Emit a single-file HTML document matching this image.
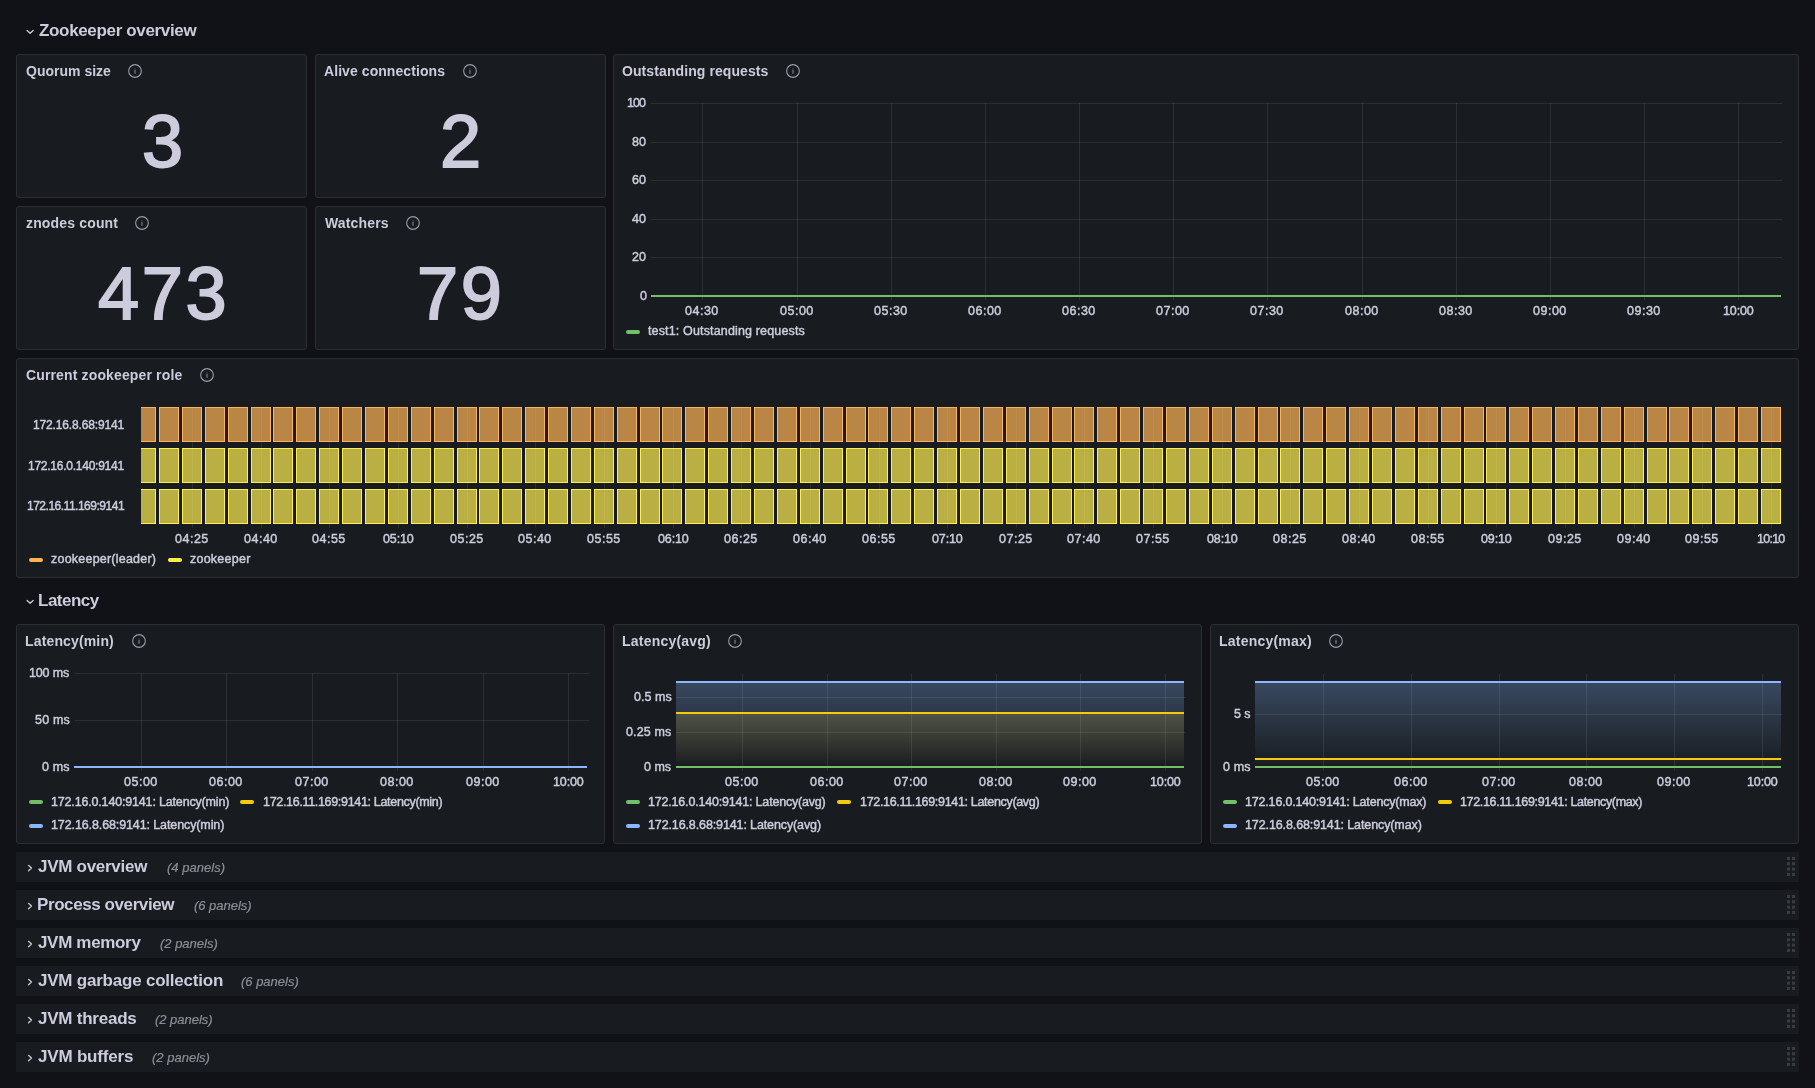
<!DOCTYPE html><html><head><meta charset="utf-8"><style>
html,body{margin:0;padding:0;background:#111217;width:1815px;height:1088px;overflow:hidden;font-family:"Liberation Sans",sans-serif;color:#ccccdc;}
.t{position:absolute;white-space:pre;will-change:transform;}
.p{position:absolute;box-sizing:border-box;background:#181b1f;border:1px solid #2c2e33;border-radius:3px;}
svg{position:absolute;overflow:visible;}
</style></head><body>
<svg style="left:0;top:0" width="1" height="1"><path d="M27.10 30.50 L30.10 33.30 L33.10 30.50" fill="none" stroke="#ccccdc" stroke-width="1.3" stroke-linecap="round" stroke-linejoin="round"/></svg>
<div class="p" style="left:16.00px;top:54.00px;width:291.00px;height:144.00px"></div>
<svg style="left:127px;top:63px" width="16" height="16" viewBox="0 0 16 16"><circle cx="8" cy="8" r="6.35" fill="none" stroke="#9a9aa6" stroke-width="1.1"/><rect x="7.45" y="7.0" width="1.1" height="3.8" fill="#9a9aa6" opacity="0.85"/><rect x="7.45" y="5.3" width="1.1" height="1.0" fill="#9a9aa6" opacity="0.6"/></svg>
<div class="p" style="left:315.00px;top:54.00px;width:291.00px;height:144.00px"></div>
<svg style="left:462px;top:63px" width="16" height="16" viewBox="0 0 16 16"><circle cx="8" cy="8" r="6.35" fill="none" stroke="#9a9aa6" stroke-width="1.1"/><rect x="7.45" y="7.0" width="1.1" height="3.8" fill="#9a9aa6" opacity="0.85"/><rect x="7.45" y="5.3" width="1.1" height="1.0" fill="#9a9aa6" opacity="0.6"/></svg>
<div class="p" style="left:16.00px;top:206.00px;width:291.00px;height:144.00px"></div>
<svg style="left:134px;top:215px" width="16" height="16" viewBox="0 0 16 16"><circle cx="8" cy="8" r="6.35" fill="none" stroke="#9a9aa6" stroke-width="1.1"/><rect x="7.45" y="7.0" width="1.1" height="3.8" fill="#9a9aa6" opacity="0.85"/><rect x="7.45" y="5.3" width="1.1" height="1.0" fill="#9a9aa6" opacity="0.6"/></svg>
<div class="p" style="left:315.00px;top:206.00px;width:291.00px;height:144.00px"></div>
<svg style="left:405px;top:215px" width="16" height="16" viewBox="0 0 16 16"><circle cx="8" cy="8" r="6.35" fill="none" stroke="#9a9aa6" stroke-width="1.1"/><rect x="7.45" y="7.0" width="1.1" height="3.8" fill="#9a9aa6" opacity="0.85"/><rect x="7.45" y="5.3" width="1.1" height="1.0" fill="#9a9aa6" opacity="0.6"/></svg>
<div class="p" style="left:613.00px;top:54.00px;width:1186.00px;height:296.00px"></div>
<svg style="left:785px;top:63px" width="16" height="16" viewBox="0 0 16 16"><circle cx="8" cy="8" r="6.35" fill="none" stroke="#9a9aa6" stroke-width="1.1"/><rect x="7.45" y="7.0" width="1.1" height="3.8" fill="#9a9aa6" opacity="0.85"/><rect x="7.45" y="5.3" width="1.1" height="1.0" fill="#9a9aa6" opacity="0.6"/></svg>
<svg style="left:0;top:0" width="1815" height="1088"><line x1="651" y1="103.5" x2="1782" y2="103.5" stroke="rgba(240,250,255,0.09)"/><line x1="651" y1="142.5" x2="1782" y2="142.5" stroke="rgba(240,250,255,0.09)"/><line x1="651" y1="180.5" x2="1782" y2="180.5" stroke="rgba(240,250,255,0.09)"/><line x1="651" y1="219.5" x2="1782" y2="219.5" stroke="rgba(240,250,255,0.09)"/><line x1="651" y1="257.5" x2="1782" y2="257.5" stroke="rgba(240,250,255,0.09)"/><line x1="702.5" y1="103" x2="702.5" y2="300" stroke="rgba(240,250,255,0.09)"/><line x1="797.5" y1="103" x2="797.5" y2="300" stroke="rgba(240,250,255,0.09)"/><line x1="891.5" y1="103" x2="891.5" y2="300" stroke="rgba(240,250,255,0.09)"/><line x1="985.5" y1="103" x2="985.5" y2="300" stroke="rgba(240,250,255,0.09)"/><line x1="1079.5" y1="103" x2="1079.5" y2="300" stroke="rgba(240,250,255,0.09)"/><line x1="1173.5" y1="103" x2="1173.5" y2="300" stroke="rgba(240,250,255,0.09)"/><line x1="1267.5" y1="103" x2="1267.5" y2="300" stroke="rgba(240,250,255,0.09)"/><line x1="1362.5" y1="103" x2="1362.5" y2="300" stroke="rgba(240,250,255,0.09)"/><line x1="1456.5" y1="103" x2="1456.5" y2="300" stroke="rgba(240,250,255,0.09)"/><line x1="1550.5" y1="103" x2="1550.5" y2="300" stroke="rgba(240,250,255,0.09)"/><line x1="1644.5" y1="103" x2="1644.5" y2="300" stroke="rgba(240,250,255,0.09)"/><line x1="1738.5" y1="103" x2="1738.5" y2="300" stroke="rgba(240,250,255,0.09)"/><line x1="651" y1="296" x2="1781" y2="296" stroke="#73bf69" stroke-width="2"/></svg>
<div style="position:absolute;left:626px;top:330px;width:14px;height:4px;border-radius:2px;background:#73bf69"></div>
<div class="p" style="left:16.00px;top:358.00px;width:1783.00px;height:220.00px"></div>
<svg style="left:199px;top:367px" width="16" height="16" viewBox="0 0 16 16"><circle cx="8" cy="8" r="6.35" fill="none" stroke="#9a9aa6" stroke-width="1.1"/><rect x="7.45" y="7.0" width="1.1" height="3.8" fill="#9a9aa6" opacity="0.85"/><rect x="7.45" y="5.3" width="1.1" height="1.0" fill="#9a9aa6" opacity="0.6"/></svg>
<svg style="left:0;top:0" width="1815" height="1088"><defs><clipPath id="cp"><rect x="141" y="400" width="1641" height="140"/></clipPath></defs><line x1="192.5" y1="407" x2="192.5" y2="528" stroke="rgba(240,250,255,0.09)"/><line x1="261.5" y1="407" x2="261.5" y2="528" stroke="rgba(240,250,255,0.09)"/><line x1="329.5" y1="407" x2="329.5" y2="528" stroke="rgba(240,250,255,0.09)"/><line x1="398.5" y1="407" x2="398.5" y2="528" stroke="rgba(240,250,255,0.09)"/><line x1="467.5" y1="407" x2="467.5" y2="528" stroke="rgba(240,250,255,0.09)"/><line x1="535.5" y1="407" x2="535.5" y2="528" stroke="rgba(240,250,255,0.09)"/><line x1="604.5" y1="407" x2="604.5" y2="528" stroke="rgba(240,250,255,0.09)"/><line x1="673.5" y1="407" x2="673.5" y2="528" stroke="rgba(240,250,255,0.09)"/><line x1="741.5" y1="407" x2="741.5" y2="528" stroke="rgba(240,250,255,0.09)"/><line x1="810.5" y1="407" x2="810.5" y2="528" stroke="rgba(240,250,255,0.09)"/><line x1="879.5" y1="407" x2="879.5" y2="528" stroke="rgba(240,250,255,0.09)"/><line x1="947.5" y1="407" x2="947.5" y2="528" stroke="rgba(240,250,255,0.09)"/><line x1="1016.5" y1="407" x2="1016.5" y2="528" stroke="rgba(240,250,255,0.09)"/><line x1="1084.5" y1="407" x2="1084.5" y2="528" stroke="rgba(240,250,255,0.09)"/><line x1="1153.5" y1="407" x2="1153.5" y2="528" stroke="rgba(240,250,255,0.09)"/><line x1="1222.5" y1="407" x2="1222.5" y2="528" stroke="rgba(240,250,255,0.09)"/><line x1="1290.5" y1="407" x2="1290.5" y2="528" stroke="rgba(240,250,255,0.09)"/><line x1="1359.5" y1="407" x2="1359.5" y2="528" stroke="rgba(240,250,255,0.09)"/><line x1="1428.5" y1="407" x2="1428.5" y2="528" stroke="rgba(240,250,255,0.09)"/><line x1="1496.5" y1="407" x2="1496.5" y2="528" stroke="rgba(240,250,255,0.09)"/><line x1="1565.5" y1="407" x2="1565.5" y2="528" stroke="rgba(240,250,255,0.09)"/><line x1="1634.5" y1="407" x2="1634.5" y2="528" stroke="rgba(240,250,255,0.09)"/><line x1="1702.5" y1="407" x2="1702.5" y2="528" stroke="rgba(240,250,255,0.09)"/><line x1="1771.5" y1="407" x2="1771.5" y2="528" stroke="rgba(240,250,255,0.09)"/><g clip-path="url(#cp)"><rect x="136.5" y="407.5" width="19" height="34" fill="rgba(255,179,87,0.7)" stroke="#ffb357"/><rect x="159.5" y="407.5" width="19" height="34" fill="rgba(255,179,87,0.7)" stroke="#ffb357"/><rect x="182.5" y="407.5" width="19" height="34" fill="rgba(255,179,87,0.7)" stroke="#ffb357"/><rect x="205.5" y="407.5" width="19" height="34" fill="rgba(255,179,87,0.7)" stroke="#ffb357"/><rect x="228.5" y="407.5" width="19" height="34" fill="rgba(255,179,87,0.7)" stroke="#ffb357"/><rect x="251.5" y="407.5" width="19" height="34" fill="rgba(255,179,87,0.7)" stroke="#ffb357"/><rect x="273.5" y="407.5" width="19" height="34" fill="rgba(255,179,87,0.7)" stroke="#ffb357"/><rect x="296.5" y="407.5" width="19" height="34" fill="rgba(255,179,87,0.7)" stroke="#ffb357"/><rect x="319.5" y="407.5" width="19" height="34" fill="rgba(255,179,87,0.7)" stroke="#ffb357"/><rect x="342.5" y="407.5" width="19" height="34" fill="rgba(255,179,87,0.7)" stroke="#ffb357"/><rect x="365.5" y="407.5" width="19" height="34" fill="rgba(255,179,87,0.7)" stroke="#ffb357"/><rect x="388.5" y="407.5" width="19" height="34" fill="rgba(255,179,87,0.7)" stroke="#ffb357"/><rect x="411.5" y="407.5" width="19" height="34" fill="rgba(255,179,87,0.7)" stroke="#ffb357"/><rect x="434.5" y="407.5" width="19" height="34" fill="rgba(255,179,87,0.7)" stroke="#ffb357"/><rect x="457.5" y="407.5" width="19" height="34" fill="rgba(255,179,87,0.7)" stroke="#ffb357"/><rect x="479.5" y="407.5" width="19" height="34" fill="rgba(255,179,87,0.7)" stroke="#ffb357"/><rect x="502.5" y="407.5" width="19" height="34" fill="rgba(255,179,87,0.7)" stroke="#ffb357"/><rect x="525.5" y="407.5" width="19" height="34" fill="rgba(255,179,87,0.7)" stroke="#ffb357"/><rect x="548.5" y="407.5" width="19" height="34" fill="rgba(255,179,87,0.7)" stroke="#ffb357"/><rect x="571.5" y="407.5" width="19" height="34" fill="rgba(255,179,87,0.7)" stroke="#ffb357"/><rect x="594.5" y="407.5" width="19" height="34" fill="rgba(255,179,87,0.7)" stroke="#ffb357"/><rect x="617.5" y="407.5" width="19" height="34" fill="rgba(255,179,87,0.7)" stroke="#ffb357"/><rect x="640.5" y="407.5" width="19" height="34" fill="rgba(255,179,87,0.7)" stroke="#ffb357"/><rect x="662.5" y="407.5" width="19" height="34" fill="rgba(255,179,87,0.7)" stroke="#ffb357"/><rect x="685.5" y="407.5" width="19" height="34" fill="rgba(255,179,87,0.7)" stroke="#ffb357"/><rect x="708.5" y="407.5" width="19" height="34" fill="rgba(255,179,87,0.7)" stroke="#ffb357"/><rect x="731.5" y="407.5" width="19" height="34" fill="rgba(255,179,87,0.7)" stroke="#ffb357"/><rect x="754.5" y="407.5" width="19" height="34" fill="rgba(255,179,87,0.7)" stroke="#ffb357"/><rect x="777.5" y="407.5" width="19" height="34" fill="rgba(255,179,87,0.7)" stroke="#ffb357"/><rect x="800.5" y="407.5" width="19" height="34" fill="rgba(255,179,87,0.7)" stroke="#ffb357"/><rect x="823.5" y="407.5" width="19" height="34" fill="rgba(255,179,87,0.7)" stroke="#ffb357"/><rect x="846.5" y="407.5" width="19" height="34" fill="rgba(255,179,87,0.7)" stroke="#ffb357"/><rect x="868.5" y="407.5" width="19" height="34" fill="rgba(255,179,87,0.7)" stroke="#ffb357"/><rect x="891.5" y="407.5" width="19" height="34" fill="rgba(255,179,87,0.7)" stroke="#ffb357"/><rect x="914.5" y="407.5" width="19" height="34" fill="rgba(255,179,87,0.7)" stroke="#ffb357"/><rect x="937.5" y="407.5" width="19" height="34" fill="rgba(255,179,87,0.7)" stroke="#ffb357"/><rect x="960.5" y="407.5" width="19" height="34" fill="rgba(255,179,87,0.7)" stroke="#ffb357"/><rect x="983.5" y="407.5" width="19" height="34" fill="rgba(255,179,87,0.7)" stroke="#ffb357"/><rect x="1006.5" y="407.5" width="19" height="34" fill="rgba(255,179,87,0.7)" stroke="#ffb357"/><rect x="1029.5" y="407.5" width="19" height="34" fill="rgba(255,179,87,0.7)" stroke="#ffb357"/><rect x="1052.5" y="407.5" width="19" height="34" fill="rgba(255,179,87,0.7)" stroke="#ffb357"/><rect x="1074.5" y="407.5" width="19" height="34" fill="rgba(255,179,87,0.7)" stroke="#ffb357"/><rect x="1097.5" y="407.5" width="19" height="34" fill="rgba(255,179,87,0.7)" stroke="#ffb357"/><rect x="1120.5" y="407.5" width="19" height="34" fill="rgba(255,179,87,0.7)" stroke="#ffb357"/><rect x="1143.5" y="407.5" width="19" height="34" fill="rgba(255,179,87,0.7)" stroke="#ffb357"/><rect x="1166.5" y="407.5" width="19" height="34" fill="rgba(255,179,87,0.7)" stroke="#ffb357"/><rect x="1189.5" y="407.5" width="19" height="34" fill="rgba(255,179,87,0.7)" stroke="#ffb357"/><rect x="1212.5" y="407.5" width="19" height="34" fill="rgba(255,179,87,0.7)" stroke="#ffb357"/><rect x="1235.5" y="407.5" width="19" height="34" fill="rgba(255,179,87,0.7)" stroke="#ffb357"/><rect x="1258.5" y="407.5" width="19" height="34" fill="rgba(255,179,87,0.7)" stroke="#ffb357"/><rect x="1280.5" y="407.5" width="19" height="34" fill="rgba(255,179,87,0.7)" stroke="#ffb357"/><rect x="1303.5" y="407.5" width="19" height="34" fill="rgba(255,179,87,0.7)" stroke="#ffb357"/><rect x="1326.5" y="407.5" width="19" height="34" fill="rgba(255,179,87,0.7)" stroke="#ffb357"/><rect x="1349.5" y="407.5" width="19" height="34" fill="rgba(255,179,87,0.7)" stroke="#ffb357"/><rect x="1372.5" y="407.5" width="19" height="34" fill="rgba(255,179,87,0.7)" stroke="#ffb357"/><rect x="1395.5" y="407.5" width="19" height="34" fill="rgba(255,179,87,0.7)" stroke="#ffb357"/><rect x="1418.5" y="407.5" width="19" height="34" fill="rgba(255,179,87,0.7)" stroke="#ffb357"/><rect x="1441.5" y="407.5" width="19" height="34" fill="rgba(255,179,87,0.7)" stroke="#ffb357"/><rect x="1464.5" y="407.5" width="19" height="34" fill="rgba(255,179,87,0.7)" stroke="#ffb357"/><rect x="1486.5" y="407.5" width="19" height="34" fill="rgba(255,179,87,0.7)" stroke="#ffb357"/><rect x="1509.5" y="407.5" width="19" height="34" fill="rgba(255,179,87,0.7)" stroke="#ffb357"/><rect x="1532.5" y="407.5" width="19" height="34" fill="rgba(255,179,87,0.7)" stroke="#ffb357"/><rect x="1555.5" y="407.5" width="19" height="34" fill="rgba(255,179,87,0.7)" stroke="#ffb357"/><rect x="1578.5" y="407.5" width="19" height="34" fill="rgba(255,179,87,0.7)" stroke="#ffb357"/><rect x="1601.5" y="407.5" width="19" height="34" fill="rgba(255,179,87,0.7)" stroke="#ffb357"/><rect x="1624.5" y="407.5" width="19" height="34" fill="rgba(255,179,87,0.7)" stroke="#ffb357"/><rect x="1647.5" y="407.5" width="19" height="34" fill="rgba(255,179,87,0.7)" stroke="#ffb357"/><rect x="1669.5" y="407.5" width="19" height="34" fill="rgba(255,179,87,0.7)" stroke="#ffb357"/><rect x="1692.5" y="407.5" width="19" height="34" fill="rgba(255,179,87,0.7)" stroke="#ffb357"/><rect x="1715.5" y="407.5" width="19" height="34" fill="rgba(255,179,87,0.7)" stroke="#ffb357"/><rect x="1738.5" y="407.5" width="19" height="34" fill="rgba(255,179,87,0.7)" stroke="#ffb357"/><rect x="1761.5" y="407.5" width="19" height="34" fill="rgba(255,179,87,0.7)" stroke="#ffb357"/><rect x="136.5" y="448.5" width="19" height="34" fill="rgba(255,238,82,0.7)" stroke="#ffee52"/><rect x="159.5" y="448.5" width="19" height="34" fill="rgba(255,238,82,0.7)" stroke="#ffee52"/><rect x="182.5" y="448.5" width="19" height="34" fill="rgba(255,238,82,0.7)" stroke="#ffee52"/><rect x="205.5" y="448.5" width="19" height="34" fill="rgba(255,238,82,0.7)" stroke="#ffee52"/><rect x="228.5" y="448.5" width="19" height="34" fill="rgba(255,238,82,0.7)" stroke="#ffee52"/><rect x="251.5" y="448.5" width="19" height="34" fill="rgba(255,238,82,0.7)" stroke="#ffee52"/><rect x="273.5" y="448.5" width="19" height="34" fill="rgba(255,238,82,0.7)" stroke="#ffee52"/><rect x="296.5" y="448.5" width="19" height="34" fill="rgba(255,238,82,0.7)" stroke="#ffee52"/><rect x="319.5" y="448.5" width="19" height="34" fill="rgba(255,238,82,0.7)" stroke="#ffee52"/><rect x="342.5" y="448.5" width="19" height="34" fill="rgba(255,238,82,0.7)" stroke="#ffee52"/><rect x="365.5" y="448.5" width="19" height="34" fill="rgba(255,238,82,0.7)" stroke="#ffee52"/><rect x="388.5" y="448.5" width="19" height="34" fill="rgba(255,238,82,0.7)" stroke="#ffee52"/><rect x="411.5" y="448.5" width="19" height="34" fill="rgba(255,238,82,0.7)" stroke="#ffee52"/><rect x="434.5" y="448.5" width="19" height="34" fill="rgba(255,238,82,0.7)" stroke="#ffee52"/><rect x="457.5" y="448.5" width="19" height="34" fill="rgba(255,238,82,0.7)" stroke="#ffee52"/><rect x="479.5" y="448.5" width="19" height="34" fill="rgba(255,238,82,0.7)" stroke="#ffee52"/><rect x="502.5" y="448.5" width="19" height="34" fill="rgba(255,238,82,0.7)" stroke="#ffee52"/><rect x="525.5" y="448.5" width="19" height="34" fill="rgba(255,238,82,0.7)" stroke="#ffee52"/><rect x="548.5" y="448.5" width="19" height="34" fill="rgba(255,238,82,0.7)" stroke="#ffee52"/><rect x="571.5" y="448.5" width="19" height="34" fill="rgba(255,238,82,0.7)" stroke="#ffee52"/><rect x="594.5" y="448.5" width="19" height="34" fill="rgba(255,238,82,0.7)" stroke="#ffee52"/><rect x="617.5" y="448.5" width="19" height="34" fill="rgba(255,238,82,0.7)" stroke="#ffee52"/><rect x="640.5" y="448.5" width="19" height="34" fill="rgba(255,238,82,0.7)" stroke="#ffee52"/><rect x="662.5" y="448.5" width="19" height="34" fill="rgba(255,238,82,0.7)" stroke="#ffee52"/><rect x="685.5" y="448.5" width="19" height="34" fill="rgba(255,238,82,0.7)" stroke="#ffee52"/><rect x="708.5" y="448.5" width="19" height="34" fill="rgba(255,238,82,0.7)" stroke="#ffee52"/><rect x="731.5" y="448.5" width="19" height="34" fill="rgba(255,238,82,0.7)" stroke="#ffee52"/><rect x="754.5" y="448.5" width="19" height="34" fill="rgba(255,238,82,0.7)" stroke="#ffee52"/><rect x="777.5" y="448.5" width="19" height="34" fill="rgba(255,238,82,0.7)" stroke="#ffee52"/><rect x="800.5" y="448.5" width="19" height="34" fill="rgba(255,238,82,0.7)" stroke="#ffee52"/><rect x="823.5" y="448.5" width="19" height="34" fill="rgba(255,238,82,0.7)" stroke="#ffee52"/><rect x="846.5" y="448.5" width="19" height="34" fill="rgba(255,238,82,0.7)" stroke="#ffee52"/><rect x="868.5" y="448.5" width="19" height="34" fill="rgba(255,238,82,0.7)" stroke="#ffee52"/><rect x="891.5" y="448.5" width="19" height="34" fill="rgba(255,238,82,0.7)" stroke="#ffee52"/><rect x="914.5" y="448.5" width="19" height="34" fill="rgba(255,238,82,0.7)" stroke="#ffee52"/><rect x="937.5" y="448.5" width="19" height="34" fill="rgba(255,238,82,0.7)" stroke="#ffee52"/><rect x="960.5" y="448.5" width="19" height="34" fill="rgba(255,238,82,0.7)" stroke="#ffee52"/><rect x="983.5" y="448.5" width="19" height="34" fill="rgba(255,238,82,0.7)" stroke="#ffee52"/><rect x="1006.5" y="448.5" width="19" height="34" fill="rgba(255,238,82,0.7)" stroke="#ffee52"/><rect x="1029.5" y="448.5" width="19" height="34" fill="rgba(255,238,82,0.7)" stroke="#ffee52"/><rect x="1052.5" y="448.5" width="19" height="34" fill="rgba(255,238,82,0.7)" stroke="#ffee52"/><rect x="1074.5" y="448.5" width="19" height="34" fill="rgba(255,238,82,0.7)" stroke="#ffee52"/><rect x="1097.5" y="448.5" width="19" height="34" fill="rgba(255,238,82,0.7)" stroke="#ffee52"/><rect x="1120.5" y="448.5" width="19" height="34" fill="rgba(255,238,82,0.7)" stroke="#ffee52"/><rect x="1143.5" y="448.5" width="19" height="34" fill="rgba(255,238,82,0.7)" stroke="#ffee52"/><rect x="1166.5" y="448.5" width="19" height="34" fill="rgba(255,238,82,0.7)" stroke="#ffee52"/><rect x="1189.5" y="448.5" width="19" height="34" fill="rgba(255,238,82,0.7)" stroke="#ffee52"/><rect x="1212.5" y="448.5" width="19" height="34" fill="rgba(255,238,82,0.7)" stroke="#ffee52"/><rect x="1235.5" y="448.5" width="19" height="34" fill="rgba(255,238,82,0.7)" stroke="#ffee52"/><rect x="1258.5" y="448.5" width="19" height="34" fill="rgba(255,238,82,0.7)" stroke="#ffee52"/><rect x="1280.5" y="448.5" width="19" height="34" fill="rgba(255,238,82,0.7)" stroke="#ffee52"/><rect x="1303.5" y="448.5" width="19" height="34" fill="rgba(255,238,82,0.7)" stroke="#ffee52"/><rect x="1326.5" y="448.5" width="19" height="34" fill="rgba(255,238,82,0.7)" stroke="#ffee52"/><rect x="1349.5" y="448.5" width="19" height="34" fill="rgba(255,238,82,0.7)" stroke="#ffee52"/><rect x="1372.5" y="448.5" width="19" height="34" fill="rgba(255,238,82,0.7)" stroke="#ffee52"/><rect x="1395.5" y="448.5" width="19" height="34" fill="rgba(255,238,82,0.7)" stroke="#ffee52"/><rect x="1418.5" y="448.5" width="19" height="34" fill="rgba(255,238,82,0.7)" stroke="#ffee52"/><rect x="1441.5" y="448.5" width="19" height="34" fill="rgba(255,238,82,0.7)" stroke="#ffee52"/><rect x="1464.5" y="448.5" width="19" height="34" fill="rgba(255,238,82,0.7)" stroke="#ffee52"/><rect x="1486.5" y="448.5" width="19" height="34" fill="rgba(255,238,82,0.7)" stroke="#ffee52"/><rect x="1509.5" y="448.5" width="19" height="34" fill="rgba(255,238,82,0.7)" stroke="#ffee52"/><rect x="1532.5" y="448.5" width="19" height="34" fill="rgba(255,238,82,0.7)" stroke="#ffee52"/><rect x="1555.5" y="448.5" width="19" height="34" fill="rgba(255,238,82,0.7)" stroke="#ffee52"/><rect x="1578.5" y="448.5" width="19" height="34" fill="rgba(255,238,82,0.7)" stroke="#ffee52"/><rect x="1601.5" y="448.5" width="19" height="34" fill="rgba(255,238,82,0.7)" stroke="#ffee52"/><rect x="1624.5" y="448.5" width="19" height="34" fill="rgba(255,238,82,0.7)" stroke="#ffee52"/><rect x="1647.5" y="448.5" width="19" height="34" fill="rgba(255,238,82,0.7)" stroke="#ffee52"/><rect x="1669.5" y="448.5" width="19" height="34" fill="rgba(255,238,82,0.7)" stroke="#ffee52"/><rect x="1692.5" y="448.5" width="19" height="34" fill="rgba(255,238,82,0.7)" stroke="#ffee52"/><rect x="1715.5" y="448.5" width="19" height="34" fill="rgba(255,238,82,0.7)" stroke="#ffee52"/><rect x="1738.5" y="448.5" width="19" height="34" fill="rgba(255,238,82,0.7)" stroke="#ffee52"/><rect x="1761.5" y="448.5" width="19" height="34" fill="rgba(255,238,82,0.7)" stroke="#ffee52"/><rect x="136.5" y="489.5" width="19" height="34" fill="rgba(255,238,82,0.7)" stroke="#ffee52"/><rect x="159.5" y="489.5" width="19" height="34" fill="rgba(255,238,82,0.7)" stroke="#ffee52"/><rect x="182.5" y="489.5" width="19" height="34" fill="rgba(255,238,82,0.7)" stroke="#ffee52"/><rect x="205.5" y="489.5" width="19" height="34" fill="rgba(255,238,82,0.7)" stroke="#ffee52"/><rect x="228.5" y="489.5" width="19" height="34" fill="rgba(255,238,82,0.7)" stroke="#ffee52"/><rect x="251.5" y="489.5" width="19" height="34" fill="rgba(255,238,82,0.7)" stroke="#ffee52"/><rect x="273.5" y="489.5" width="19" height="34" fill="rgba(255,238,82,0.7)" stroke="#ffee52"/><rect x="296.5" y="489.5" width="19" height="34" fill="rgba(255,238,82,0.7)" stroke="#ffee52"/><rect x="319.5" y="489.5" width="19" height="34" fill="rgba(255,238,82,0.7)" stroke="#ffee52"/><rect x="342.5" y="489.5" width="19" height="34" fill="rgba(255,238,82,0.7)" stroke="#ffee52"/><rect x="365.5" y="489.5" width="19" height="34" fill="rgba(255,238,82,0.7)" stroke="#ffee52"/><rect x="388.5" y="489.5" width="19" height="34" fill="rgba(255,238,82,0.7)" stroke="#ffee52"/><rect x="411.5" y="489.5" width="19" height="34" fill="rgba(255,238,82,0.7)" stroke="#ffee52"/><rect x="434.5" y="489.5" width="19" height="34" fill="rgba(255,238,82,0.7)" stroke="#ffee52"/><rect x="457.5" y="489.5" width="19" height="34" fill="rgba(255,238,82,0.7)" stroke="#ffee52"/><rect x="479.5" y="489.5" width="19" height="34" fill="rgba(255,238,82,0.7)" stroke="#ffee52"/><rect x="502.5" y="489.5" width="19" height="34" fill="rgba(255,238,82,0.7)" stroke="#ffee52"/><rect x="525.5" y="489.5" width="19" height="34" fill="rgba(255,238,82,0.7)" stroke="#ffee52"/><rect x="548.5" y="489.5" width="19" height="34" fill="rgba(255,238,82,0.7)" stroke="#ffee52"/><rect x="571.5" y="489.5" width="19" height="34" fill="rgba(255,238,82,0.7)" stroke="#ffee52"/><rect x="594.5" y="489.5" width="19" height="34" fill="rgba(255,238,82,0.7)" stroke="#ffee52"/><rect x="617.5" y="489.5" width="19" height="34" fill="rgba(255,238,82,0.7)" stroke="#ffee52"/><rect x="640.5" y="489.5" width="19" height="34" fill="rgba(255,238,82,0.7)" stroke="#ffee52"/><rect x="662.5" y="489.5" width="19" height="34" fill="rgba(255,238,82,0.7)" stroke="#ffee52"/><rect x="685.5" y="489.5" width="19" height="34" fill="rgba(255,238,82,0.7)" stroke="#ffee52"/><rect x="708.5" y="489.5" width="19" height="34" fill="rgba(255,238,82,0.7)" stroke="#ffee52"/><rect x="731.5" y="489.5" width="19" height="34" fill="rgba(255,238,82,0.7)" stroke="#ffee52"/><rect x="754.5" y="489.5" width="19" height="34" fill="rgba(255,238,82,0.7)" stroke="#ffee52"/><rect x="777.5" y="489.5" width="19" height="34" fill="rgba(255,238,82,0.7)" stroke="#ffee52"/><rect x="800.5" y="489.5" width="19" height="34" fill="rgba(255,238,82,0.7)" stroke="#ffee52"/><rect x="823.5" y="489.5" width="19" height="34" fill="rgba(255,238,82,0.7)" stroke="#ffee52"/><rect x="846.5" y="489.5" width="19" height="34" fill="rgba(255,238,82,0.7)" stroke="#ffee52"/><rect x="868.5" y="489.5" width="19" height="34" fill="rgba(255,238,82,0.7)" stroke="#ffee52"/><rect x="891.5" y="489.5" width="19" height="34" fill="rgba(255,238,82,0.7)" stroke="#ffee52"/><rect x="914.5" y="489.5" width="19" height="34" fill="rgba(255,238,82,0.7)" stroke="#ffee52"/><rect x="937.5" y="489.5" width="19" height="34" fill="rgba(255,238,82,0.7)" stroke="#ffee52"/><rect x="960.5" y="489.5" width="19" height="34" fill="rgba(255,238,82,0.7)" stroke="#ffee52"/><rect x="983.5" y="489.5" width="19" height="34" fill="rgba(255,238,82,0.7)" stroke="#ffee52"/><rect x="1006.5" y="489.5" width="19" height="34" fill="rgba(255,238,82,0.7)" stroke="#ffee52"/><rect x="1029.5" y="489.5" width="19" height="34" fill="rgba(255,238,82,0.7)" stroke="#ffee52"/><rect x="1052.5" y="489.5" width="19" height="34" fill="rgba(255,238,82,0.7)" stroke="#ffee52"/><rect x="1074.5" y="489.5" width="19" height="34" fill="rgba(255,238,82,0.7)" stroke="#ffee52"/><rect x="1097.5" y="489.5" width="19" height="34" fill="rgba(255,238,82,0.7)" stroke="#ffee52"/><rect x="1120.5" y="489.5" width="19" height="34" fill="rgba(255,238,82,0.7)" stroke="#ffee52"/><rect x="1143.5" y="489.5" width="19" height="34" fill="rgba(255,238,82,0.7)" stroke="#ffee52"/><rect x="1166.5" y="489.5" width="19" height="34" fill="rgba(255,238,82,0.7)" stroke="#ffee52"/><rect x="1189.5" y="489.5" width="19" height="34" fill="rgba(255,238,82,0.7)" stroke="#ffee52"/><rect x="1212.5" y="489.5" width="19" height="34" fill="rgba(255,238,82,0.7)" stroke="#ffee52"/><rect x="1235.5" y="489.5" width="19" height="34" fill="rgba(255,238,82,0.7)" stroke="#ffee52"/><rect x="1258.5" y="489.5" width="19" height="34" fill="rgba(255,238,82,0.7)" stroke="#ffee52"/><rect x="1280.5" y="489.5" width="19" height="34" fill="rgba(255,238,82,0.7)" stroke="#ffee52"/><rect x="1303.5" y="489.5" width="19" height="34" fill="rgba(255,238,82,0.7)" stroke="#ffee52"/><rect x="1326.5" y="489.5" width="19" height="34" fill="rgba(255,238,82,0.7)" stroke="#ffee52"/><rect x="1349.5" y="489.5" width="19" height="34" fill="rgba(255,238,82,0.7)" stroke="#ffee52"/><rect x="1372.5" y="489.5" width="19" height="34" fill="rgba(255,238,82,0.7)" stroke="#ffee52"/><rect x="1395.5" y="489.5" width="19" height="34" fill="rgba(255,238,82,0.7)" stroke="#ffee52"/><rect x="1418.5" y="489.5" width="19" height="34" fill="rgba(255,238,82,0.7)" stroke="#ffee52"/><rect x="1441.5" y="489.5" width="19" height="34" fill="rgba(255,238,82,0.7)" stroke="#ffee52"/><rect x="1464.5" y="489.5" width="19" height="34" fill="rgba(255,238,82,0.7)" stroke="#ffee52"/><rect x="1486.5" y="489.5" width="19" height="34" fill="rgba(255,238,82,0.7)" stroke="#ffee52"/><rect x="1509.5" y="489.5" width="19" height="34" fill="rgba(255,238,82,0.7)" stroke="#ffee52"/><rect x="1532.5" y="489.5" width="19" height="34" fill="rgba(255,238,82,0.7)" stroke="#ffee52"/><rect x="1555.5" y="489.5" width="19" height="34" fill="rgba(255,238,82,0.7)" stroke="#ffee52"/><rect x="1578.5" y="489.5" width="19" height="34" fill="rgba(255,238,82,0.7)" stroke="#ffee52"/><rect x="1601.5" y="489.5" width="19" height="34" fill="rgba(255,238,82,0.7)" stroke="#ffee52"/><rect x="1624.5" y="489.5" width="19" height="34" fill="rgba(255,238,82,0.7)" stroke="#ffee52"/><rect x="1647.5" y="489.5" width="19" height="34" fill="rgba(255,238,82,0.7)" stroke="#ffee52"/><rect x="1669.5" y="489.5" width="19" height="34" fill="rgba(255,238,82,0.7)" stroke="#ffee52"/><rect x="1692.5" y="489.5" width="19" height="34" fill="rgba(255,238,82,0.7)" stroke="#ffee52"/><rect x="1715.5" y="489.5" width="19" height="34" fill="rgba(255,238,82,0.7)" stroke="#ffee52"/><rect x="1738.5" y="489.5" width="19" height="34" fill="rgba(255,238,82,0.7)" stroke="#ffee52"/><rect x="1761.5" y="489.5" width="19" height="34" fill="rgba(255,238,82,0.7)" stroke="#ffee52"/></g></svg>
<div style="position:absolute;left:29px;top:558px;width:14px;height:4px;border-radius:2px;background:#ffb357"></div>
<div style="position:absolute;left:168px;top:558px;width:14px;height:4px;border-radius:2px;background:#ffee52"></div>
<svg style="left:0;top:0" width="1" height="1"><path d="M27.10 600.40 L30.10 603.20 L33.10 600.40" fill="none" stroke="#ccccdc" stroke-width="1.3" stroke-linecap="round" stroke-linejoin="round"/></svg>
<div class="p" style="left:16.00px;top:624.00px;width:589.00px;height:220.00px"></div>
<svg style="left:131px;top:633px" width="16" height="16" viewBox="0 0 16 16"><circle cx="8" cy="8" r="6.35" fill="none" stroke="#9a9aa6" stroke-width="1.1"/><rect x="7.45" y="7.0" width="1.1" height="3.8" fill="#9a9aa6" opacity="0.85"/><rect x="7.45" y="5.3" width="1.1" height="1.0" fill="#9a9aa6" opacity="0.6"/></svg>
<svg style="left:0;top:0" width="1815" height="1088"><line x1="75" y1="673.5" x2="589" y2="673.5" stroke="rgba(240,250,255,0.09)"/><line x1="75" y1="720.5" x2="589" y2="720.5" stroke="rgba(240,250,255,0.09)"/><line x1="141.5" y1="673" x2="141.5" y2="771" stroke="rgba(240,250,255,0.09)"/><line x1="226.5" y1="673" x2="226.5" y2="771" stroke="rgba(240,250,255,0.09)"/><line x1="312.5" y1="673" x2="312.5" y2="771" stroke="rgba(240,250,255,0.09)"/><line x1="397.5" y1="673" x2="397.5" y2="771" stroke="rgba(240,250,255,0.09)"/><line x1="483.5" y1="673" x2="483.5" y2="771" stroke="rgba(240,250,255,0.09)"/><line x1="568.5" y1="673" x2="568.5" y2="771" stroke="rgba(240,250,255,0.09)"/><line x1="74" y1="767" x2="587" y2="767" stroke="#73bf69" stroke-width="2"/><line x1="74" y1="767" x2="587" y2="767" stroke="#f2cc0c" stroke-width="2"/><line x1="74" y1="767" x2="587" y2="767" stroke="#8ab8ff" stroke-width="2"/></svg>
<div style="position:absolute;left:29px;top:800px;width:14px;height:4px;border-radius:2px;background:#73bf69"></div>
<div style="position:absolute;left:240px;top:800px;width:14px;height:4px;border-radius:2px;background:#f2cc0c"></div>
<div style="position:absolute;left:29px;top:824px;width:14px;height:4px;border-radius:2px;background:#8ab8ff"></div>
<div class="p" style="left:613.00px;top:624.00px;width:589.00px;height:220.00px"></div>
<svg style="left:727px;top:633px" width="16" height="16" viewBox="0 0 16 16"><circle cx="8" cy="8" r="6.35" fill="none" stroke="#9a9aa6" stroke-width="1.1"/><rect x="7.45" y="7.0" width="1.1" height="3.8" fill="#9a9aa6" opacity="0.85"/><rect x="7.45" y="5.3" width="1.1" height="1.0" fill="#9a9aa6" opacity="0.6"/></svg>
<svg style="left:0;top:0" width="1815" height="1088"><defs><linearGradient id="gb" gradientUnits="userSpaceOnUse" x1="0" y1="674" x2="0" y2="767"><stop offset="0" stop-color="#8ab8ff" stop-opacity="0.32"/><stop offset="1" stop-color="#8ab8ff" stop-opacity="0"/></linearGradient><linearGradient id="gy" gradientUnits="userSpaceOnUse" x1="0" y1="674" x2="0" y2="767"><stop offset="0" stop-color="#f2cc0c" stop-opacity="0.32"/><stop offset="1" stop-color="#f2cc0c" stop-opacity="0"/></linearGradient></defs><line x1="676" y1="697.5" x2="1186" y2="697.5" stroke="rgba(240,250,255,0.09)"/><line x1="676" y1="732.5" x2="1186" y2="732.5" stroke="rgba(240,250,255,0.09)"/><line x1="742.5" y1="674" x2="742.5" y2="771" stroke="rgba(240,250,255,0.09)"/><line x1="827.5" y1="674" x2="827.5" y2="771" stroke="rgba(240,250,255,0.09)"/><line x1="911.5" y1="674" x2="911.5" y2="771" stroke="rgba(240,250,255,0.09)"/><line x1="996.5" y1="674" x2="996.5" y2="771" stroke="rgba(240,250,255,0.09)"/><line x1="1080.5" y1="674" x2="1080.5" y2="771" stroke="rgba(240,250,255,0.09)"/><line x1="1165.5" y1="674" x2="1165.5" y2="771" stroke="rgba(240,250,255,0.09)"/><rect x="676" y="713" width="508" height="54" fill="url(#gy)"/><rect x="676" y="682" width="508" height="85" fill="url(#gb)"/><line x1="676" y1="767" x2="1184" y2="767" stroke="#73bf69" stroke-width="2"/><line x1="676" y1="713" x2="1184" y2="713" stroke="#f2cc0c" stroke-width="2"/><line x1="676" y1="682" x2="1184" y2="682" stroke="#8ab8ff" stroke-width="2"/></svg>
<div style="position:absolute;left:626px;top:800px;width:14px;height:4px;border-radius:2px;background:#73bf69"></div>
<div style="position:absolute;left:837px;top:800px;width:14px;height:4px;border-radius:2px;background:#f2cc0c"></div>
<div style="position:absolute;left:626px;top:824px;width:14px;height:4px;border-radius:2px;background:#8ab8ff"></div>
<div class="p" style="left:1210.00px;top:624.00px;width:589.00px;height:220.00px"></div>
<svg style="left:1328px;top:633px" width="16" height="16" viewBox="0 0 16 16"><circle cx="8" cy="8" r="6.35" fill="none" stroke="#9a9aa6" stroke-width="1.1"/><rect x="7.45" y="7.0" width="1.1" height="3.8" fill="#9a9aa6" opacity="0.85"/><rect x="7.45" y="5.3" width="1.1" height="1.0" fill="#9a9aa6" opacity="0.6"/></svg>
<svg style="left:0;top:0" width="1815" height="1088"><line x1="1255" y1="714.5" x2="1783" y2="714.5" stroke="rgba(240,250,255,0.09)"/><line x1="1323.5" y1="674" x2="1323.5" y2="771" stroke="rgba(240,250,255,0.09)"/><line x1="1411.5" y1="674" x2="1411.5" y2="771" stroke="rgba(240,250,255,0.09)"/><line x1="1499.5" y1="674" x2="1499.5" y2="771" stroke="rgba(240,250,255,0.09)"/><line x1="1586.5" y1="674" x2="1586.5" y2="771" stroke="rgba(240,250,255,0.09)"/><line x1="1674.5" y1="674" x2="1674.5" y2="771" stroke="rgba(240,250,255,0.09)"/><line x1="1762.5" y1="674" x2="1762.5" y2="771" stroke="rgba(240,250,255,0.09)"/><rect x="1255" y="759" width="526" height="8" fill="url(#gy)"/><rect x="1255" y="682" width="526" height="85" fill="url(#gb)"/><line x1="1255" y1="767" x2="1781" y2="767" stroke="#73bf69" stroke-width="2"/><line x1="1255" y1="759" x2="1781" y2="759" stroke="#f2cc0c" stroke-width="2"/><line x1="1255" y1="682" x2="1781" y2="682" stroke="#8ab8ff" stroke-width="2"/></svg>
<div style="position:absolute;left:1223px;top:800px;width:14px;height:4px;border-radius:2px;background:#73bf69"></div>
<div style="position:absolute;left:1438px;top:800px;width:14px;height:4px;border-radius:2px;background:#f2cc0c"></div>
<div style="position:absolute;left:1223px;top:824px;width:14px;height:4px;border-radius:2px;background:#8ab8ff"></div>
<div style="position:absolute;left:16px;top:852px;width:1783px;height:30px;background:#181b1f"></div>
<svg style="left:0;top:0" width="1" height="1"><path d="M28.50 865.30 L31.50 868.05 L28.50 870.80" fill="none" stroke="#ccccdc" stroke-width="1.25" stroke-linecap="round" stroke-linejoin="round"/></svg>
<svg style="left:0;top:0" width="1815" height="1088"><rect x="1787" y="857.0" width="3" height="3" fill="#3b3c40"/><rect x="1792" y="857.0" width="3" height="3" fill="#3b3c40"/><rect x="1787" y="862.3" width="3" height="3" fill="#3b3c40"/><rect x="1792" y="862.3" width="3" height="3" fill="#3b3c40"/><rect x="1787" y="867.6" width="3" height="3" fill="#3b3c40"/><rect x="1792" y="867.6" width="3" height="3" fill="#3b3c40"/><rect x="1787" y="872.9" width="3" height="3" fill="#3b3c40"/><rect x="1792" y="872.9" width="3" height="3" fill="#3b3c40"/></svg>
<div style="position:absolute;left:16px;top:890px;width:1783px;height:30px;background:#181b1f"></div>
<svg style="left:0;top:0" width="1" height="1"><path d="M28.50 903.30 L31.50 906.05 L28.50 908.80" fill="none" stroke="#ccccdc" stroke-width="1.25" stroke-linecap="round" stroke-linejoin="round"/></svg>
<svg style="left:0;top:0" width="1815" height="1088"><rect x="1787" y="895.0" width="3" height="3" fill="#3b3c40"/><rect x="1792" y="895.0" width="3" height="3" fill="#3b3c40"/><rect x="1787" y="900.3" width="3" height="3" fill="#3b3c40"/><rect x="1792" y="900.3" width="3" height="3" fill="#3b3c40"/><rect x="1787" y="905.6" width="3" height="3" fill="#3b3c40"/><rect x="1792" y="905.6" width="3" height="3" fill="#3b3c40"/><rect x="1787" y="910.9" width="3" height="3" fill="#3b3c40"/><rect x="1792" y="910.9" width="3" height="3" fill="#3b3c40"/></svg>
<div style="position:absolute;left:16px;top:928px;width:1783px;height:30px;background:#181b1f"></div>
<svg style="left:0;top:0" width="1" height="1"><path d="M28.50 941.30 L31.50 944.05 L28.50 946.80" fill="none" stroke="#ccccdc" stroke-width="1.25" stroke-linecap="round" stroke-linejoin="round"/></svg>
<svg style="left:0;top:0" width="1815" height="1088"><rect x="1787" y="933.0" width="3" height="3" fill="#3b3c40"/><rect x="1792" y="933.0" width="3" height="3" fill="#3b3c40"/><rect x="1787" y="938.3" width="3" height="3" fill="#3b3c40"/><rect x="1792" y="938.3" width="3" height="3" fill="#3b3c40"/><rect x="1787" y="943.6" width="3" height="3" fill="#3b3c40"/><rect x="1792" y="943.6" width="3" height="3" fill="#3b3c40"/><rect x="1787" y="948.9" width="3" height="3" fill="#3b3c40"/><rect x="1792" y="948.9" width="3" height="3" fill="#3b3c40"/></svg>
<div style="position:absolute;left:16px;top:966px;width:1783px;height:30px;background:#181b1f"></div>
<svg style="left:0;top:0" width="1" height="1"><path d="M28.50 979.30 L31.50 982.05 L28.50 984.80" fill="none" stroke="#ccccdc" stroke-width="1.25" stroke-linecap="round" stroke-linejoin="round"/></svg>
<svg style="left:0;top:0" width="1815" height="1088"><rect x="1787" y="971.0" width="3" height="3" fill="#3b3c40"/><rect x="1792" y="971.0" width="3" height="3" fill="#3b3c40"/><rect x="1787" y="976.3" width="3" height="3" fill="#3b3c40"/><rect x="1792" y="976.3" width="3" height="3" fill="#3b3c40"/><rect x="1787" y="981.6" width="3" height="3" fill="#3b3c40"/><rect x="1792" y="981.6" width="3" height="3" fill="#3b3c40"/><rect x="1787" y="986.9" width="3" height="3" fill="#3b3c40"/><rect x="1792" y="986.9" width="3" height="3" fill="#3b3c40"/></svg>
<div style="position:absolute;left:16px;top:1004px;width:1783px;height:30px;background:#181b1f"></div>
<svg style="left:0;top:0" width="1" height="1"><path d="M28.50 1017.30 L31.50 1020.05 L28.50 1022.80" fill="none" stroke="#ccccdc" stroke-width="1.25" stroke-linecap="round" stroke-linejoin="round"/></svg>
<svg style="left:0;top:0" width="1815" height="1088"><rect x="1787" y="1009.0" width="3" height="3" fill="#3b3c40"/><rect x="1792" y="1009.0" width="3" height="3" fill="#3b3c40"/><rect x="1787" y="1014.3" width="3" height="3" fill="#3b3c40"/><rect x="1792" y="1014.3" width="3" height="3" fill="#3b3c40"/><rect x="1787" y="1019.6" width="3" height="3" fill="#3b3c40"/><rect x="1792" y="1019.6" width="3" height="3" fill="#3b3c40"/><rect x="1787" y="1024.9" width="3" height="3" fill="#3b3c40"/><rect x="1792" y="1024.9" width="3" height="3" fill="#3b3c40"/></svg>
<div style="position:absolute;left:16px;top:1042px;width:1783px;height:30px;background:#181b1f"></div>
<svg style="left:0;top:0" width="1" height="1"><path d="M28.50 1055.30 L31.50 1058.05 L28.50 1060.80" fill="none" stroke="#ccccdc" stroke-width="1.25" stroke-linecap="round" stroke-linejoin="round"/></svg>
<svg style="left:0;top:0" width="1815" height="1088"><rect x="1787" y="1047.0" width="3" height="3" fill="#3b3c40"/><rect x="1792" y="1047.0" width="3" height="3" fill="#3b3c40"/><rect x="1787" y="1052.3" width="3" height="3" fill="#3b3c40"/><rect x="1792" y="1052.3" width="3" height="3" fill="#3b3c40"/><rect x="1787" y="1057.6" width="3" height="3" fill="#3b3c40"/><rect x="1792" y="1057.6" width="3" height="3" fill="#3b3c40"/><rect x="1787" y="1062.9" width="3" height="3" fill="#3b3c40"/><rect x="1792" y="1062.9" width="3" height="3" fill="#3b3c40"/></svg>
<div class="t" style="left:38.60px;top:21px;font-size:17px;line-height:19px;font-weight:bold;letter-spacing:-0.34px;">Zookeeper overview</div>
<div class="t" style="left:25.60px;top:63px;font-size:14px;line-height:16px;font-weight:bold;letter-spacing:0.01px;">Quorum size</div>
<div class="t" style="left:141.55px;top:100px;font-size:74px;line-height:83px;-webkit-text-stroke:1.9px #ccccdc;">3</div>
<div class="t" style="left:323.90px;top:63px;font-size:14px;line-height:16px;font-weight:bold;letter-spacing:0.07px;">Alive connections</div>
<div class="t" style="left:439.65px;top:100px;font-size:74px;line-height:83px;-webkit-text-stroke:1.9px #ccccdc;">2</div>
<div class="t" style="left:25.60px;top:215px;font-size:14px;line-height:16px;font-weight:bold;letter-spacing:0.16px;">znodes count</div>
<div class="t" style="left:98.15px;top:252px;font-size:74px;line-height:83px;letter-spacing:2.64px;-webkit-text-stroke:1.9px #ccccdc;">473</div>
<div class="t" style="left:324.60px;top:215px;font-size:14px;line-height:16px;font-weight:bold;letter-spacing:0.16px;">Watchers</div>
<div class="t" style="left:417.35px;top:252px;font-size:74px;line-height:83px;letter-spacing:2.54px;-webkit-text-stroke:1.9px #ccccdc;">79</div>
<div class="t" style="left:622.00px;top:63px;font-size:14px;line-height:16px;font-weight:bold;letter-spacing:0.09px;">Outstanding requests</div>
<div class="t" style="left:627.02px;top:96px;font-size:12.5px;line-height:14px;letter-spacing:-0.93px;-webkit-text-stroke:0.45px #ccccdc;">100</div>
<div class="t" style="left:632.12px;top:135px;font-size:12.5px;line-height:14px;-webkit-text-stroke:0.45px #ccccdc;">80</div>
<div class="t" style="left:632.12px;top:173px;font-size:12.5px;line-height:14px;-webkit-text-stroke:0.45px #ccccdc;">60</div>
<div class="t" style="left:632.12px;top:212px;font-size:12.5px;line-height:14px;-webkit-text-stroke:0.45px #ccccdc;">40</div>
<div class="t" style="left:632.12px;top:250px;font-size:12.5px;line-height:14px;-webkit-text-stroke:0.45px #ccccdc;">20</div>
<div class="t" style="left:639.83px;top:289px;font-size:12.5px;line-height:14px;-webkit-text-stroke:0.45px #ccccdc;">0</div>
<div class="t" style="left:685.33px;top:304px;font-size:12.5px;line-height:14px;letter-spacing:0.51px;-webkit-text-stroke:0.45px #ccccdc;">04:30</div>
<div class="t" style="left:780.33px;top:304px;font-size:12.5px;line-height:14px;letter-spacing:0.51px;-webkit-text-stroke:0.45px #ccccdc;">05:00</div>
<div class="t" style="left:874.33px;top:304px;font-size:12.5px;line-height:14px;letter-spacing:0.51px;-webkit-text-stroke:0.45px #ccccdc;">05:30</div>
<div class="t" style="left:968.33px;top:304px;font-size:12.5px;line-height:14px;letter-spacing:0.51px;-webkit-text-stroke:0.45px #ccccdc;">06:00</div>
<div class="t" style="left:1062.32px;top:304px;font-size:12.5px;line-height:14px;letter-spacing:0.51px;-webkit-text-stroke:0.45px #ccccdc;">06:30</div>
<div class="t" style="left:1156.32px;top:304px;font-size:12.5px;line-height:14px;letter-spacing:0.51px;-webkit-text-stroke:0.45px #ccccdc;">07:00</div>
<div class="t" style="left:1250.32px;top:304px;font-size:12.5px;line-height:14px;letter-spacing:0.51px;-webkit-text-stroke:0.45px #ccccdc;">07:30</div>
<div class="t" style="left:1345.32px;top:304px;font-size:12.5px;line-height:14px;letter-spacing:0.51px;-webkit-text-stroke:0.45px #ccccdc;">08:00</div>
<div class="t" style="left:1439.32px;top:304px;font-size:12.5px;line-height:14px;letter-spacing:0.51px;-webkit-text-stroke:0.45px #ccccdc;">08:30</div>
<div class="t" style="left:1533.32px;top:304px;font-size:12.5px;line-height:14px;letter-spacing:0.51px;-webkit-text-stroke:0.45px #ccccdc;">09:00</div>
<div class="t" style="left:1627.32px;top:304px;font-size:12.5px;line-height:14px;letter-spacing:0.51px;-webkit-text-stroke:0.45px #ccccdc;">09:30</div>
<div class="t" style="left:1722.57px;top:304px;font-size:12.5px;line-height:14px;letter-spacing:-0.12px;-webkit-text-stroke:0.45px #ccccdc;">10:00</div>
<div class="t" style="left:648.33px;top:324px;font-size:12.5px;line-height:14px;letter-spacing:0.15px;-webkit-text-stroke:0.45px #ccccdc;">test1: Outstanding requests</div>
<div class="t" style="left:25.50px;top:367px;font-size:14px;line-height:16px;font-weight:bold;letter-spacing:0.14px;">Current zookeeper role</div>
<div class="t" style="left:33.02px;top:418px;font-size:12px;line-height:14px;letter-spacing:-0.15px;-webkit-text-stroke:0.45px #ccccdc;">172.16.8.68:9141</div>
<div class="t" style="left:28.23px;top:459px;font-size:12px;line-height:14px;letter-spacing:-0.25px;-webkit-text-stroke:0.45px #ccccdc;">172.16.0.140:9141</div>
<div class="t" style="left:26.73px;top:499px;font-size:12px;line-height:14px;letter-spacing:-0.49px;-webkit-text-stroke:0.45px #ccccdc;">172.16.11.169:9141</div>
<div class="t" style="left:175.32px;top:532px;font-size:12.5px;line-height:14px;letter-spacing:0.51px;-webkit-text-stroke:0.45px #ccccdc;">04:25</div>
<div class="t" style="left:244.32px;top:532px;font-size:12.5px;line-height:14px;letter-spacing:0.51px;-webkit-text-stroke:0.45px #ccccdc;">04:40</div>
<div class="t" style="left:312.33px;top:532px;font-size:12.5px;line-height:14px;letter-spacing:0.51px;-webkit-text-stroke:0.45px #ccccdc;">04:55</div>
<div class="t" style="left:382.58px;top:532px;font-size:12.5px;line-height:14px;letter-spacing:-0.12px;-webkit-text-stroke:0.45px #ccccdc;">05:10</div>
<div class="t" style="left:450.33px;top:532px;font-size:12.5px;line-height:14px;letter-spacing:0.51px;-webkit-text-stroke:0.45px #ccccdc;">05:25</div>
<div class="t" style="left:518.33px;top:532px;font-size:12.5px;line-height:14px;letter-spacing:0.51px;-webkit-text-stroke:0.45px #ccccdc;">05:40</div>
<div class="t" style="left:587.33px;top:532px;font-size:12.5px;line-height:14px;letter-spacing:0.51px;-webkit-text-stroke:0.45px #ccccdc;">05:55</div>
<div class="t" style="left:657.58px;top:532px;font-size:12.5px;line-height:14px;letter-spacing:-0.12px;-webkit-text-stroke:0.45px #ccccdc;">06:10</div>
<div class="t" style="left:724.33px;top:532px;font-size:12.5px;line-height:14px;letter-spacing:0.51px;-webkit-text-stroke:0.45px #ccccdc;">06:25</div>
<div class="t" style="left:793.33px;top:532px;font-size:12.5px;line-height:14px;letter-spacing:0.51px;-webkit-text-stroke:0.45px #ccccdc;">06:40</div>
<div class="t" style="left:862.33px;top:532px;font-size:12.5px;line-height:14px;letter-spacing:0.51px;-webkit-text-stroke:0.45px #ccccdc;">06:55</div>
<div class="t" style="left:931.58px;top:532px;font-size:12.5px;line-height:14px;letter-spacing:-0.12px;-webkit-text-stroke:0.45px #ccccdc;">07:10</div>
<div class="t" style="left:999.33px;top:532px;font-size:12.5px;line-height:14px;letter-spacing:0.51px;-webkit-text-stroke:0.45px #ccccdc;">07:25</div>
<div class="t" style="left:1067.32px;top:532px;font-size:12.5px;line-height:14px;letter-spacing:0.51px;-webkit-text-stroke:0.45px #ccccdc;">07:40</div>
<div class="t" style="left:1136.32px;top:532px;font-size:12.5px;line-height:14px;letter-spacing:0.51px;-webkit-text-stroke:0.45px #ccccdc;">07:55</div>
<div class="t" style="left:1206.57px;top:532px;font-size:12.5px;line-height:14px;letter-spacing:-0.12px;-webkit-text-stroke:0.45px #ccccdc;">08:10</div>
<div class="t" style="left:1273.32px;top:532px;font-size:12.5px;line-height:14px;letter-spacing:0.51px;-webkit-text-stroke:0.45px #ccccdc;">08:25</div>
<div class="t" style="left:1342.32px;top:532px;font-size:12.5px;line-height:14px;letter-spacing:0.51px;-webkit-text-stroke:0.45px #ccccdc;">08:40</div>
<div class="t" style="left:1411.32px;top:532px;font-size:12.5px;line-height:14px;letter-spacing:0.51px;-webkit-text-stroke:0.45px #ccccdc;">08:55</div>
<div class="t" style="left:1480.57px;top:532px;font-size:12.5px;line-height:14px;letter-spacing:-0.12px;-webkit-text-stroke:0.45px #ccccdc;">09:10</div>
<div class="t" style="left:1548.32px;top:532px;font-size:12.5px;line-height:14px;letter-spacing:0.51px;-webkit-text-stroke:0.45px #ccccdc;">09:25</div>
<div class="t" style="left:1617.32px;top:532px;font-size:12.5px;line-height:14px;letter-spacing:0.51px;-webkit-text-stroke:0.45px #ccccdc;">09:40</div>
<div class="t" style="left:1685.32px;top:532px;font-size:12.5px;line-height:14px;letter-spacing:0.51px;-webkit-text-stroke:0.45px #ccccdc;">09:55</div>
<div class="t" style="left:1756.82px;top:532px;font-size:12.5px;line-height:14px;letter-spacing:-0.74px;-webkit-text-stroke:0.45px #ccccdc;">10:10</div>
<div class="t" style="left:51.43px;top:552px;font-size:12.5px;line-height:14px;letter-spacing:0.22px;-webkit-text-stroke:0.45px #ccccdc;">zookeeper(leader)</div>
<div class="t" style="left:190.03px;top:552px;font-size:12.5px;line-height:14px;letter-spacing:0.24px;-webkit-text-stroke:0.45px #ccccdc;">zookeeper</div>
<div class="t" style="left:37.50px;top:591px;font-size:17px;line-height:19px;font-weight:bold;letter-spacing:-0.50px;">Latency</div>
<div class="t" style="left:25.40px;top:633px;font-size:14px;line-height:16px;font-weight:bold;letter-spacing:0.15px;">Latency(min)</div>
<div class="t" style="left:29.33px;top:666px;font-size:12.5px;line-height:14px;letter-spacing:-0.16px;-webkit-text-stroke:0.45px #ccccdc;">100 ms</div>
<div class="t" style="left:34.73px;top:713px;font-size:12.5px;line-height:14px;letter-spacing:0.19px;-webkit-text-stroke:0.45px #ccccdc;">50 ms</div>
<div class="t" style="left:42.02px;top:760px;font-size:12.5px;line-height:14px;letter-spacing:0.14px;-webkit-text-stroke:0.45px #ccccdc;">0 ms</div>
<div class="t" style="left:124.32px;top:775px;font-size:12.5px;line-height:14px;letter-spacing:0.51px;-webkit-text-stroke:0.45px #ccccdc;">05:00</div>
<div class="t" style="left:209.32px;top:775px;font-size:12.5px;line-height:14px;letter-spacing:0.51px;-webkit-text-stroke:0.45px #ccccdc;">06:00</div>
<div class="t" style="left:295.33px;top:775px;font-size:12.5px;line-height:14px;letter-spacing:0.51px;-webkit-text-stroke:0.45px #ccccdc;">07:00</div>
<div class="t" style="left:380.33px;top:775px;font-size:12.5px;line-height:14px;letter-spacing:0.51px;-webkit-text-stroke:0.45px #ccccdc;">08:00</div>
<div class="t" style="left:466.33px;top:775px;font-size:12.5px;line-height:14px;letter-spacing:0.51px;-webkit-text-stroke:0.45px #ccccdc;">09:00</div>
<div class="t" style="left:552.58px;top:775px;font-size:12.5px;line-height:14px;letter-spacing:-0.12px;-webkit-text-stroke:0.45px #ccccdc;">10:00</div>
<div class="t" style="left:51.23px;top:795px;font-size:12.5px;line-height:14px;letter-spacing:-0.17px;-webkit-text-stroke:0.45px #ccccdc;">172.16.0.140:9141: Latency(min)</div>
<div class="t" style="left:263.03px;top:795px;font-size:12.5px;line-height:14px;letter-spacing:-0.32px;-webkit-text-stroke:0.45px #ccccdc;">172.16.11.169:9141: Latency(min)</div>
<div class="t" style="left:51.23px;top:818px;font-size:12.5px;line-height:14px;letter-spacing:-0.11px;-webkit-text-stroke:0.45px #ccccdc;">172.16.8.68:9141: Latency(min)</div>
<div class="t" style="left:622.20px;top:633px;font-size:14px;line-height:16px;font-weight:bold;letter-spacing:0.22px;">Latency(avg)</div>
<div class="t" style="left:633.62px;top:690px;font-size:12.5px;line-height:14px;letter-spacing:0.04px;-webkit-text-stroke:0.45px #ccccdc;">0.5 ms</div>
<div class="t" style="left:626.12px;top:725px;font-size:12.5px;line-height:14px;letter-spacing:0.12px;-webkit-text-stroke:0.45px #ccccdc;">0.25 ms</div>
<div class="t" style="left:644.23px;top:760px;font-size:12.5px;line-height:14px;-webkit-text-stroke:0.45px #ccccdc;">0 ms</div>
<div class="t" style="left:725.33px;top:775px;font-size:12.5px;line-height:14px;letter-spacing:0.51px;-webkit-text-stroke:0.45px #ccccdc;">05:00</div>
<div class="t" style="left:810.33px;top:775px;font-size:12.5px;line-height:14px;letter-spacing:0.51px;-webkit-text-stroke:0.45px #ccccdc;">06:00</div>
<div class="t" style="left:894.33px;top:775px;font-size:12.5px;line-height:14px;letter-spacing:0.51px;-webkit-text-stroke:0.45px #ccccdc;">07:00</div>
<div class="t" style="left:979.33px;top:775px;font-size:12.5px;line-height:14px;letter-spacing:0.51px;-webkit-text-stroke:0.45px #ccccdc;">08:00</div>
<div class="t" style="left:1063.32px;top:775px;font-size:12.5px;line-height:14px;letter-spacing:0.51px;-webkit-text-stroke:0.45px #ccccdc;">09:00</div>
<div class="t" style="left:1149.57px;top:775px;font-size:12.5px;line-height:14px;letter-spacing:-0.12px;-webkit-text-stroke:0.45px #ccccdc;">10:00</div>
<div class="t" style="left:648.43px;top:795px;font-size:12.5px;line-height:14px;letter-spacing:-0.19px;-webkit-text-stroke:0.45px #ccccdc;">172.16.0.140:9141: Latency(avg)</div>
<div class="t" style="left:859.62px;top:795px;font-size:12.5px;line-height:14px;letter-spacing:-0.32px;-webkit-text-stroke:0.45px #ccccdc;">172.16.11.169:9141: Latency(avg)</div>
<div class="t" style="left:648.43px;top:818px;font-size:12.5px;line-height:14px;letter-spacing:-0.12px;-webkit-text-stroke:0.45px #ccccdc;">172.16.8.68:9141: Latency(avg)</div>
<div class="t" style="left:1219.40px;top:633px;font-size:14px;line-height:16px;font-weight:bold;letter-spacing:0.22px;">Latency(max)</div>
<div class="t" style="left:1234.02px;top:707px;font-size:12.5px;line-height:14px;letter-spacing:-0.09px;-webkit-text-stroke:0.45px #ccccdc;">5 s</div>
<div class="t" style="left:1223.02px;top:760px;font-size:12.5px;line-height:14px;letter-spacing:0.14px;-webkit-text-stroke:0.45px #ccccdc;">0 ms</div>
<div class="t" style="left:1306.32px;top:775px;font-size:12.5px;line-height:14px;letter-spacing:0.51px;-webkit-text-stroke:0.45px #ccccdc;">05:00</div>
<div class="t" style="left:1394.32px;top:775px;font-size:12.5px;line-height:14px;letter-spacing:0.51px;-webkit-text-stroke:0.45px #ccccdc;">06:00</div>
<div class="t" style="left:1482.32px;top:775px;font-size:12.5px;line-height:14px;letter-spacing:0.51px;-webkit-text-stroke:0.45px #ccccdc;">07:00</div>
<div class="t" style="left:1569.32px;top:775px;font-size:12.5px;line-height:14px;letter-spacing:0.51px;-webkit-text-stroke:0.45px #ccccdc;">08:00</div>
<div class="t" style="left:1657.32px;top:775px;font-size:12.5px;line-height:14px;letter-spacing:0.51px;-webkit-text-stroke:0.45px #ccccdc;">09:00</div>
<div class="t" style="left:1746.57px;top:775px;font-size:12.5px;line-height:14px;letter-spacing:-0.12px;-webkit-text-stroke:0.45px #ccccdc;">10:00</div>
<div class="t" style="left:1245.22px;top:795px;font-size:12.5px;line-height:14px;letter-spacing:-0.18px;-webkit-text-stroke:0.45px #ccccdc;">172.16.0.140:9141: Latency(max)</div>
<div class="t" style="left:1460.22px;top:795px;font-size:12.5px;line-height:14px;letter-spacing:-0.34px;-webkit-text-stroke:0.45px #ccccdc;">172.16.11.169:9141: Latency(max)</div>
<div class="t" style="left:1245.22px;top:818px;font-size:12.5px;line-height:14px;letter-spacing:-0.11px;-webkit-text-stroke:0.45px #ccccdc;">172.16.8.68:9141: Latency(max)</div>
<div class="t" style="left:38.40px;top:857px;font-size:17px;line-height:19px;font-weight:bold;letter-spacing:-0.28px;">JVM overview</div>
<div class="t" style="left:166.50px;top:860px;font-size:13px;line-height:15px;font-style:italic;color:#8e8e9a;letter-spacing:0.04px;-webkit-text-stroke:0.2px #8e8e9a;">(4 panels)</div>
<div class="t" style="left:37.40px;top:895px;font-size:17px;line-height:19px;font-weight:bold;letter-spacing:-0.41px;">Process overview</div>
<div class="t" style="left:193.90px;top:898px;font-size:13px;line-height:15px;font-style:italic;color:#8e8e9a;letter-spacing:-0.03px;-webkit-text-stroke:0.2px #8e8e9a;">(6 panels)</div>
<div class="t" style="left:38.40px;top:933px;font-size:17px;line-height:19px;font-weight:bold;letter-spacing:-0.33px;">JVM memory</div>
<div class="t" style="left:159.80px;top:936px;font-size:13px;line-height:15px;font-style:italic;color:#8e8e9a;letter-spacing:-0.01px;-webkit-text-stroke:0.2px #8e8e9a;">(2 panels)</div>
<div class="t" style="left:38.40px;top:971px;font-size:17px;line-height:19px;font-weight:bold;letter-spacing:-0.22px;">JVM garbage collection</div>
<div class="t" style="left:241.30px;top:974px;font-size:13px;line-height:15px;font-style:italic;color:#8e8e9a;letter-spacing:-0.01px;-webkit-text-stroke:0.2px #8e8e9a;">(6 panels)</div>
<div class="t" style="left:38.40px;top:1009px;font-size:17px;line-height:19px;font-weight:bold;letter-spacing:-0.23px;">JVM threads</div>
<div class="t" style="left:154.90px;top:1012px;font-size:13px;line-height:15px;font-style:italic;color:#8e8e9a;letter-spacing:-0.03px;-webkit-text-stroke:0.2px #8e8e9a;">(2 panels)</div>
<div class="t" style="left:38.40px;top:1047px;font-size:17px;line-height:19px;font-weight:bold;letter-spacing:-0.19px;">JVM buffers</div>
<div class="t" style="left:151.50px;top:1050px;font-size:13px;line-height:15px;font-style:italic;color:#8e8e9a;letter-spacing:0.01px;-webkit-text-stroke:0.2px #8e8e9a;">(2 panels)</div>
</body></html>
